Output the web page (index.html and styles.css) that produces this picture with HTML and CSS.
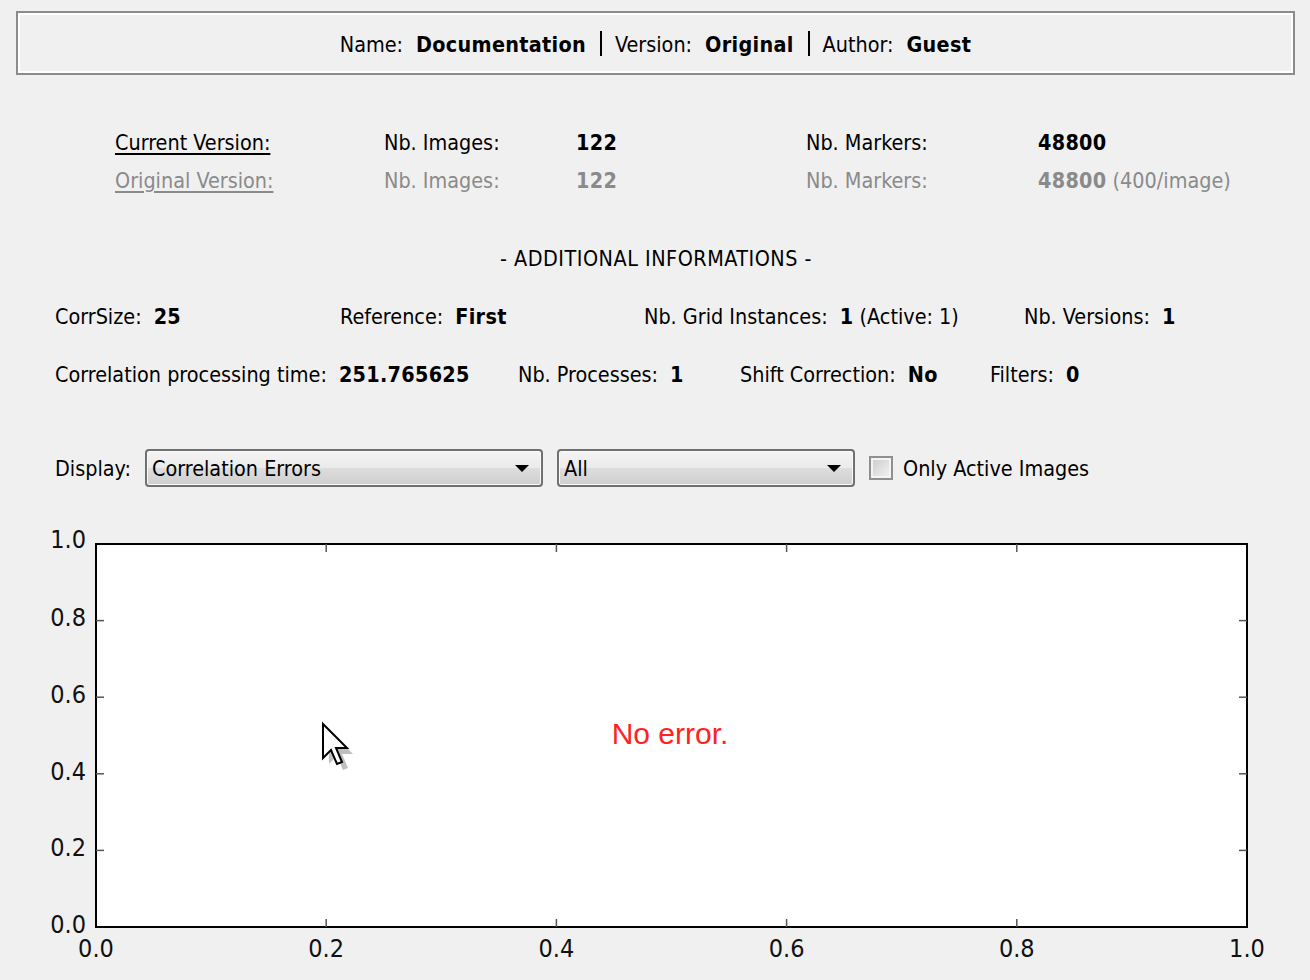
FILE: index.html
```html
<!DOCTYPE html>
<html>
<head>
<meta charset="utf-8">
<link rel="stylesheet" href="styles.css">
</head>
<body>
<div class="page">
  <div class="header">
    <span class="lbl">Name:</span><b class="val">Documentation</b>
    <span class="sep"></span>
    <span class="lbl">Version:</span><b class="val">Original</b>
    <span class="sep"></span>
    <span class="lbl">Author:</span><b class="val">Guest</b>
  </div>

  <div class="versions">
    <span class="link cur">Current Version:</span>
    <span>Nb. Images:</span>
    <b>122</b>
    <span>Nb. Markers:</span>
    <b>48800</b>

    <span class="link orig">Original Version:</span>
    <span class="muted">Nb. Images:</span>
    <b class="muted">122</b>
    <span class="muted">Nb. Markers:</span>
    <span class="muted"><b>48800</b> (400/image)</span>
  </div>

  <div class="addtitle">- ADDITIONAL INFORMATIONS -</div>

  <div class="info row1">
    <div><span>CorrSize:</span><b class="v">25</b></div>
    <div><span>Reference:</span><b class="v">First</b></div>
    <div><span>Nb. Grid Instances:</span><b class="v">1</b> (Active: 1)</div>
    <div><span>Nb. Versions:</span><b class="v">1</b></div>
  </div>
  <div class="info row2">
    <div><span>Correlation processing time:</span><b class="v">251.765625</b></div>
    <div><span>Nb. Processes:</span><b class="v">1</b></div>
    <div><span>Shift Correction:</span><b class="v">No</b></div>
    <div><span>Filters:</span><b class="v">0</b></div>
  </div>

  <div class="display">
    <span class="dlabel">Display:</span>
    <div class="combo c1"><span>Correlation Errors</span><span class="arrow"></span></div>
    <div class="combo c2"><span>All</span><span class="arrow"></span></div>
    <span class="check"></span>
    <span class="clabel">Only Active Images</span>
  </div>

  <div class="plot">
    <svg class="chart" width="1310" height="480" viewBox="0 0 1310 480">
      <rect x="96" y="43" width="1151" height="383" fill="#ffffff" stroke="#000000" stroke-width="2"/>
      <g stroke="#555555" stroke-width="1.5">
        <line x1="326.2" y1="426" x2="326.2" y2="418"/>
        <line x1="556.4" y1="426" x2="556.4" y2="418"/>
        <line x1="786.6" y1="426" x2="786.6" y2="418"/>
        <line x1="1016.8" y1="426" x2="1016.8" y2="418"/>
        <line x1="326.2" y1="43" x2="326.2" y2="51"/>
        <line x1="556.4" y1="43" x2="556.4" y2="51"/>
        <line x1="786.6" y1="43" x2="786.6" y2="51"/>
        <line x1="1016.8" y1="43" x2="1016.8" y2="51"/>
        <line x1="96" y1="119.6" x2="104" y2="119.6"/>
        <line x1="96" y1="196.2" x2="104" y2="196.2"/>
        <line x1="96" y1="272.8" x2="104" y2="272.8"/>
        <line x1="96" y1="349.4" x2="104" y2="349.4"/>
        <line x1="1247" y1="119.6" x2="1239" y2="119.6"/>
        <line x1="1247" y1="196.2" x2="1239" y2="196.2"/>
        <line x1="1247" y1="272.8" x2="1239" y2="272.8"/>
        <line x1="1247" y1="349.4" x2="1239" y2="349.4"/>
      </g>
      <g class="ticklbl" text-anchor="end">
        <text x="86" y="47">1.0</text>
        <text x="86" y="125">0.8</text>
        <text x="86" y="202">0.6</text>
        <text x="86" y="279">0.4</text>
        <text x="86" y="355">0.2</text>
        <text x="86" y="432">0.0</text>
      </g>
      <g class="ticklbl" text-anchor="middle">
        <text x="96" y="456">0.0</text>
        <text x="326.2" y="456">0.2</text>
        <text x="556.4" y="456">0.4</text>
        <text x="786.6" y="456">0.6</text>
        <text x="1016.8" y="456">0.8</text>
        <text x="1247" y="456">1.0</text>
      </g>
      <text class="noerr" x="670" y="243" text-anchor="middle">No error.</text>
      <g class="cursor">
        <path d="M326,226 L326,260 L334,252 L340,266 L345,264 L339,250 L350,250 Z" fill="#000" opacity="0.25" transform="translate(3,3)"/>
        <path d="M323,223 L323,257 L331,249 L337,263 L342,261 L336,247 L347,247 Z" fill="#ffffff" stroke="#000000" stroke-width="2" stroke-linejoin="miter"/>
      </g>
    </svg>
  </div>
</div>
</body>
</html>
```
FILE: styles.css
```css
html, body {
  margin: 0;
  padding: 0;
  background: #f0f0f0;
}
body {
  width: 1310px;
  height: 980px;
  overflow: hidden;
  font-family: "DejaVu Sans Condensed", "DejaVu Sans", sans-serif;
  font-stretch: condensed;
  font-size: 21.4px;
  color: #000;
}
b {
  letter-spacing: 0.3px;
}
.page {
  display: flex;
  flex-direction: column;
}
.header {
  margin: 11px 0 0 16px;
  width: 1279px;
  height: 64px;
  box-sizing: border-box;
  border: 2px solid #8a8c90;
  box-shadow: inset 0 0 0 2px #ffffff;
  display: flex;
  align-items: center;
  justify-content: center;
  padding-top: 3px;
  color: #000;
}
.header .val {
  margin-left: 13px;
}
.header .sep {
  display: inline-block;
  width: 2px;
  height: 25px;
  background: #000;
  margin: -3px 13px 0 14px;
}
.versions {
  margin-top: 49px;
  padding-left: 115px;
  display: grid;
  grid-template-columns: 269px 192px 230px 232px auto;
  line-height: 38px;
}
.link {
  text-decoration: underline;
  text-decoration-thickness: 2px;
  text-underline-offset: 3px;
  justify-self: start;
}
.orig, .muted {
  color: #8a8a8a;
}
.addtitle {
  margin-top: 40px;
  line-height: 38px;
  text-align: center;
  padding-left: 2px;
  letter-spacing: 0.5px;
}
.info {
  display: grid;
  line-height: 38px;
  padding-left: 55px;
  margin-top: 20px;
}
.row1 {
  grid-template-columns: 285px 304px 380px auto;
}
.row2 {
  grid-template-columns: 463px 222px 250px auto;
}
.info .v {
  margin-left: 12px;
}
.display {
  margin-top: 55px;
  display: flex;
  align-items: center;
  height: 38px;
  padding-left: 55px;
}
.dlabel {
  width: 90px;
}
.combo {
  box-sizing: border-box;
  height: 38px;
  border: 2px solid #707070;
  border-radius: 4px;
  background: linear-gradient(#f4f4f4 0%, #ebebeb 50%, #dddddd 51%, #cfcfcf 100%);
  box-shadow: inset 0 0 0 1px #fafafa;
  display: flex;
  align-items: center;
  justify-content: space-between;
  padding: 0 12px 0 5px;
}
.c1 {
  width: 398px;
}
.c2 {
  width: 298px;
  margin-left: 14px;
}
.arrow {
  width: 0;
  height: 0;
  border-left: 7px solid transparent;
  border-right: 7px solid transparent;
  border-top: 7px solid #000;
}
.check {
  box-sizing: border-box;
  width: 24px;
  height: 24px;
  margin-left: 14px;
  border: 2px solid #8e8f8f;
  background: linear-gradient(135deg, #cbcbcb, #f4f4f4);
  box-shadow: inset 0 0 0 2px #f4f4f4;
}
.clabel {
  margin-left: 10px;
}
.plot {
  margin-top: 14px;
}
.chart {
  display: block;
}
.ticklbl text {
  font-family: "DejaVu Sans", sans-serif;
  font-size: 25px;
  fill: #111;
}
.noerr {
  font-family: "Liberation Sans", Arial, sans-serif;
  font-size: 30px;
  fill: #ff2222;
}
```
